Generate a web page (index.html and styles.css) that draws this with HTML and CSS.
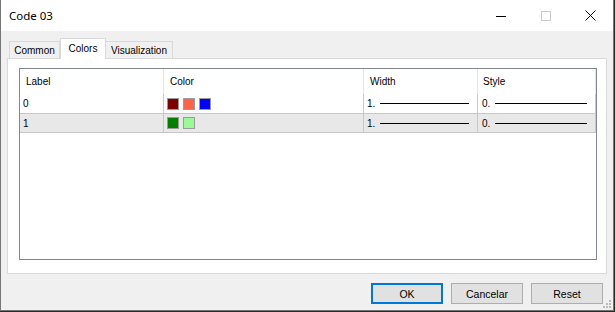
FILE: index.html
```html
<!DOCTYPE html>
<html lang="pt">
<head>
    <meta charset="UTF-8">
    <title>Code 03</title>
    <link rel="stylesheet" href="styles.css">
</head>
<body>
    <div class="window">
        <div class="titlebar">
            <span class="title">Code 03</span>
            <div class="caption-buttons">
                <span class="cap-btn">
                    <svg width="10" height="10" viewBox="0 0 10 10"><path d="M0 5.5H10" stroke="#000" stroke-width="1"/></svg>
                </span>
                <span class="cap-btn">
                    <svg width="10" height="10" viewBox="0 0 10 10"><rect x="0.5" y="0.5" width="9" height="9" fill="none" stroke="#cccccc"/></svg>
                </span>
                <span class="cap-btn">
                    <svg width="11" height="11" viewBox="0 0 11 11"><path d="M0.5 0.5L10.5 10.5M10.5 0.5L0.5 10.5" stroke="#000" stroke-width="1"/></svg>
                </span>
            </div>
        </div>

        <div class="client">
            <div class="tabs">
                <div class="tab">Common</div>
                <div class="tab active">Colors</div>
                <div class="tab last">Visualization</div>
            </div>

            <div class="tab-panel">
                <div class="list">
                    <div class="list-row list-head">
                        <div class="cell">Label</div>
                        <div class="cell">Color</div>
                        <div class="cell">Width</div>
                        <div class="cell">Style</div>
                    </div>
                    <div class="list-row">
                        <div class="cell">0</div>
                        <div class="cell swatches">
                            <span class="swatch" style="background:#800000"></span>
                            <span class="swatch" style="background:#ff6347"></span>
                            <span class="swatch" style="background:#0000ff"></span>
                        </div>
                        <div class="cell line-cell"><span class="val">1.</span><span class="line w-line"></span></div>
                        <div class="cell line-cell"><span class="val">0.</span><span class="line s-line"></span></div>
                    </div>
                    <div class="list-row alt">
                        <div class="cell">1</div>
                        <div class="cell swatches">
                            <span class="swatch" style="background:#008000"></span>
                            <span class="swatch" style="background:#98fb98"></span>
                        </div>
                        <div class="cell line-cell"><span class="val">1.</span><span class="line w-line"></span></div>
                        <div class="cell line-cell"><span class="val">0.</span><span class="line s-line"></span></div>
                    </div>
                </div>
            </div>

            <div class="footer">
                <button class="btn btn-default">OK</button>
                <button class="btn">Cancelar</button>
                <button class="btn">Reset</button>
            </div>
        </div>

        <svg class="grip" width="9" height="9" viewBox="0 0 9 9">
            <rect x="6" y="0" width="2" height="2" fill="#bcbcbc"/>
            <rect x="3" y="3" width="2" height="2" fill="#bcbcbc"/>
            <rect x="6" y="3" width="2" height="2" fill="#bcbcbc"/>
            <rect x="0" y="6" width="2" height="2" fill="#bcbcbc"/>
            <rect x="3" y="6" width="2" height="2" fill="#bcbcbc"/>
            <rect x="6" y="6" width="2" height="2" fill="#bcbcbc"/>
        </svg>
    </div>
</body>
</html>
```

FILE: styles.css
```css
* {
    margin: 0;
    padding: 0;
    box-sizing: border-box;
    font-family: 'Liberation Sans', Arial, sans-serif;
}

body {
    background-color: #2b2927;
    width: 615px;
    height: 312px;
    overflow: hidden;
}

.window {
    position: relative;
    width: 614px;
    height: 311px;
    background: #f0f0f0;
    border: 1px solid #767676;
    border-top: none;
    display: flex;
    flex-direction: column;
}

.titlebar {
    height: 31px;
    background: #fff;
    display: flex;
    align-items: center;
    padding-left: 8px;
}

.title {
    font-family: 'Noto Sans', sans-serif;
    font-size: 11.5px;
    color: #000;
    flex: 1;
}

.caption-buttons {
    display: flex;
    height: 100%;
}

.cap-btn {
    width: 45px;
    height: 100%;
    display: flex;
    align-items: center;
    justify-content: center;
}

.client {
    flex: 1;
    display: flex;
    flex-direction: column;
    padding: 7px 6px 0 6px;
}

.tabs {
    display: flex;
    height: 20px;
    padding-left: 2px;
    align-items: flex-end;
    position: relative;
    z-index: 1;
}

.tab {
    height: 17px;
    border: 1px solid #d9d9d9;
    border-bottom: none;
    font-size: 10px;
    color: #000;
    display: flex;
    align-items: center;
    justify-content: center;
    padding-top: 1px;
}

.tab:first-child {
    width: 51px;
}

.tab.active {
    width: 46px;
    height: 21px;
    margin-bottom: -1px;
    background: #fff;
    padding-top: 0;
    padding-bottom: 2px;
}

.tab.last {
    width: 67px;
    border-left: none;
}

.tab-panel {
    height: 216px;
    background: #fff;
    border: 1px solid #d9d9d9;
    padding: 9px 9px 13px 11px;
    display: flex;
}

.list {
    flex: 1;
    border: 1px solid #828790;
    background: #fff;
}

.list-row {
    display: grid;
    grid-template-columns: 144px 200px 114px 118px;
    height: 19px;
    font-size: 10px;
    color: #000;
}

.list-row .cell {
    border-right: 1px solid #c8c8c8;
    display: flex;
    align-items: center;
    padding-left: 3px;
}

.list-head {
    height: 25px;
}

.list-head .cell {
    border-right-color: #e5e5e5;
    padding-left: 6px;
}

.list-head .cell:last-child {
    padding-left: 5px;
}

.list-row.alt {
    height: 20px;
    background: #e8e8e8;
    border-top: 1px solid #c8c8c8;
    border-bottom: 1px solid #c8c8c8;
}

.swatches {
    gap: 4px;
}

.swatch {
    width: 12px;
    height: 12px;
    border: 1px solid #9b9b9b;
}

.line-cell:last-child {
    padding-left: 4px;
}

.val {
    width: 13px;
}

.line {
    height: 1px;
    background: #000;
}

.w-line {
    width: 89px;
}

.s-line {
    width: 92px;
}

.footer {
    flex: 1;
    display: flex;
    justify-content: flex-end;
    align-items: flex-start;
    gap: 8px;
    padding: 9px 4px 0 0;
}

.btn {
    width: 72px;
    height: 21px;
    background: #e1e1e1;
    border: 1px solid #adadad;
    font-size: 10.5px;
    color: #000;
}

.btn-default {
    border: 2px solid #0078d7;
}

.grip {
    position: absolute;
    left: 602px;
    top: 300px;
}
```
